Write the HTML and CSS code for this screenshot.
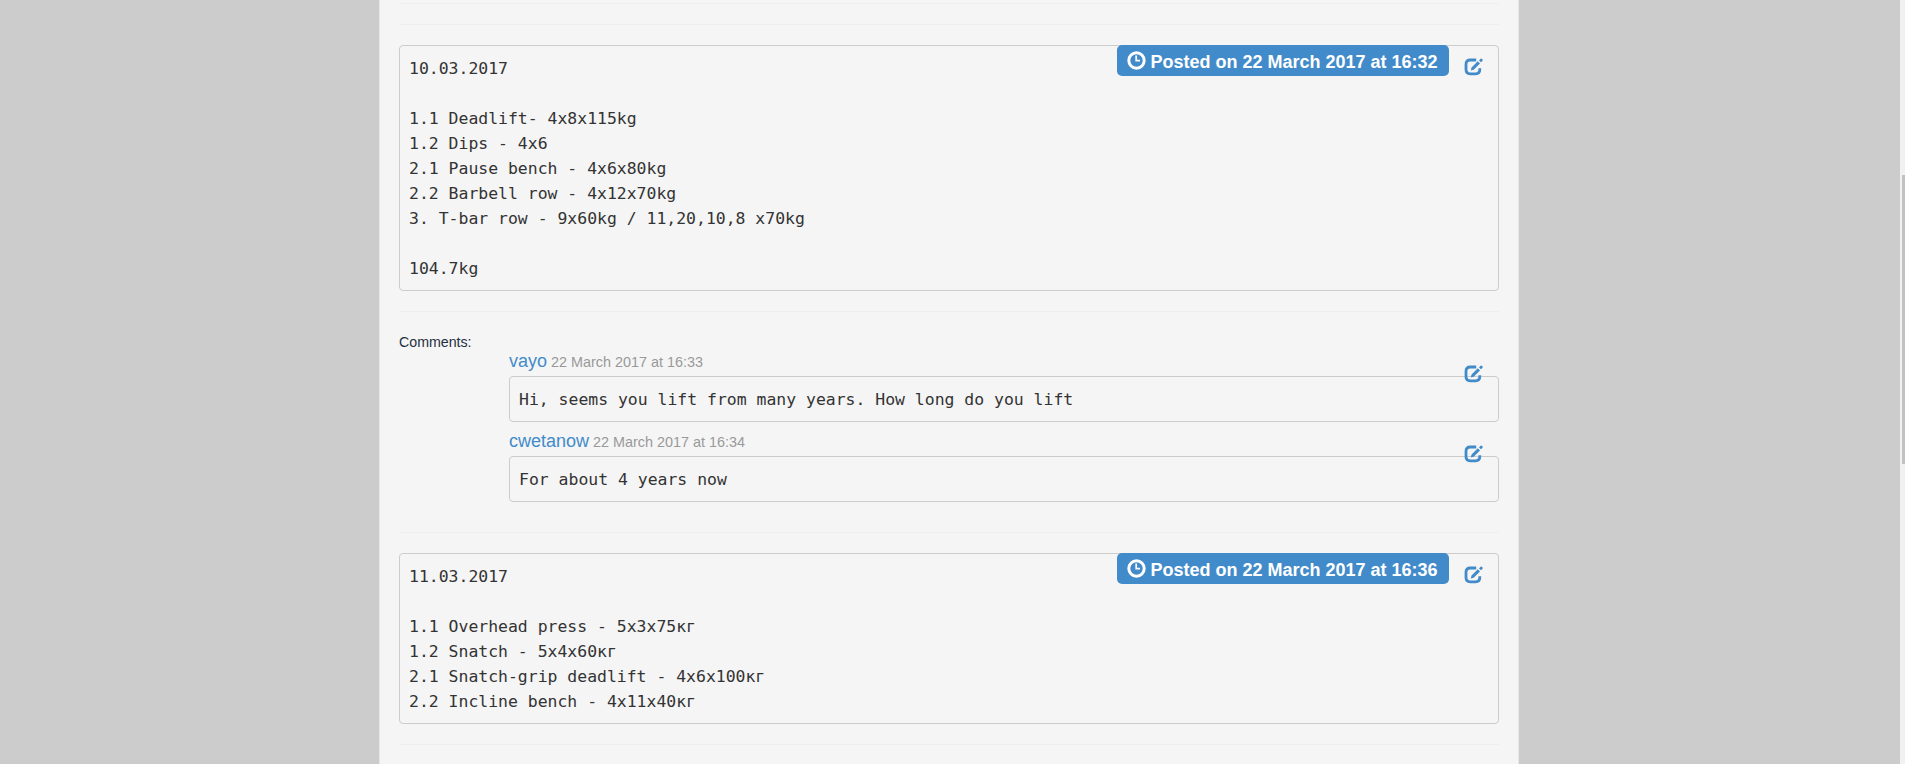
FILE: index.html
```
<!DOCTYPE html>
<html lang="en">
<head>
<meta charset="utf-8">
<title>Training log</title>
<link rel="stylesheet" href="styles.css">
</head>
<body>
<svg class="defs" aria-hidden="true">
  <symbol id="edit" viewBox="0 0 20 18">
    <path d="M12.2 2H6.2Q2 2 2 6.2V11.6Q2 15.8 6.2 15.8H11.6Q15.8 15.8 15.8 11.6V10.2" fill="none" stroke="currentColor" stroke-width="2.8"/>
    <path d="M6.8 12.6L7.5 9.6 13.8 3.2 16 5.4 9.7 11.8ZM15 2.4L16.6.8Q17.2.2 17.8.8L18.5 1.5Q19.1 2.1 18.5 2.7L17 4.3Z" fill="currentColor"/>
  </symbol>
  <symbol id="clock" viewBox="0 0 19 19">
    <circle cx="9.5" cy="9.5" r="7.7" fill="none" stroke="currentColor" stroke-width="3"/>
    <path d="M9.2 4.5V9.7H13" fill="none" stroke="currentColor" stroke-width="1.7"/>
  </symbol>
</svg>
<main class="wrapper">
  <hr>
  <hr>
  <article class="post">
    <pre class="box">10.03.2017

1.1 Deadlift- 4x8x115kg
1.2 Dips - 4x6
2.1 Pause bench - 4x6x80kg
2.2 Barbell row - 4x12x70kg
3. T-bar row - 9x60kg / 11,20,10,8 x70kg

104.7kg</pre>
    <div class="label"><svg class="clock"><use href="#clock"/></svg><span>Posted on 22 March 2017 at 16:32</span></div>
    <a class="edit"><svg><use href="#edit"/></svg></a>
  </article>
  <hr>
  <section class="comments">
    <div class="heading">Comments:</div>
    <div class="comment">
      <div class="meta"><a class="author">vayo</a> <small>22 March 2017 at 16:33</small></div>
      <pre class="box">Hi, seems you lift from many years. How long do you lift</pre>
      <a class="edit"><svg><use href="#edit"/></svg></a>
    </div>
    <div class="comment">
      <div class="meta"><a class="author">cwetanow</a> <small>22 March 2017 at 16:34</small></div>
      <pre class="box">For about 4 years now</pre>
      <a class="edit"><svg><use href="#edit"/></svg></a>
    </div>
  </section>
  <hr>
  <article class="post">
    <pre class="box">11.03.2017

1.1 Overhead press - 5x3x75кг
1.2 Snatch - 5x4x60кг
2.1 Snatch-grip deadlift - 4x6x100кг
2.2 Incline bench - 4x11x40кг</pre>
    <div class="label"><svg class="clock"><use href="#clock"/></svg><span>Posted on 22 March 2017 at 16:36</span></div>
    <a class="edit"><svg><use href="#edit"/></svg></a>
  </article>
  <hr>
</main>
<div class="scrollbar"><div class="thumb"></div></div>
</body>
</html>
```
FILE: styles.css
```
* { box-sizing: border-box; }
body {
  margin: 0;
  height: 764px;
  overflow: hidden;
  background: #ccc;
  color: #2c3e50;
  font: 14px/20px "Liberation Sans", Arial, sans-serif;
}
.defs { display: none; }
.wrapper {
  width: 1140px;
  height: 764px;
  margin-left: 379px;
  padding: 3px 19px 0;
  background: #f5f5f5;
  border: solid #e7e7e7;
  border-width: 0 1px;
}
hr {
  height: 1px;
  margin: 0 0 20px;
  border: 0;
  background: #eee;
}
.post { position: relative; margin-bottom: 20px; }
.box {
  margin: 0;
  padding: 9.5px 9px;
  border: 1px solid #ccc;
  border-radius: 4px;
  color: #333;
  font: 16.44px/25px "DejaVu Sans Mono", monospace;
}
.label {
  position: absolute;
  top: 0;
  right: 50px;
  display: flex;
  width: 332px;
  height: 31px;
  padding: 6px 10px 0;
  border-radius: 5px;
  background: #428bca;
  color: #fff;
  font-weight: bold;
  font-size: 18px;
  line-height: 21px;
  white-space: nowrap;
}
.label span { padding-top: 1px; }
.clock { width: 19px; height: 19px; margin-right: 4.5px; flex: none; }
.edit {
  position: absolute;
  top: 13px;
  right: 15px;
  color: #428bca;
}
.edit svg { display: block; width: 20px; height: 18px; }
.comments { padding-bottom: 20px; }
.heading { color: #1f2f3f; font-size: 14.2px; }
.comment {
  position: relative;
  margin: 0 0 10px 110px;
}
.meta { height: 24px; line-height: 18px; }
.author { color: #428bca; font-size: 18px; }
.meta small { color: #999; font-size: 14.4px; }
.scrollbar {
  position: absolute;
  top: 0;
  right: 0;
  width: 5px;
  height: 764px;
  padding: 175px 0 0 2px;
  background: #f1f1f1;
}
.thumb { height: 289px; background: #c1c1c1; }
```
